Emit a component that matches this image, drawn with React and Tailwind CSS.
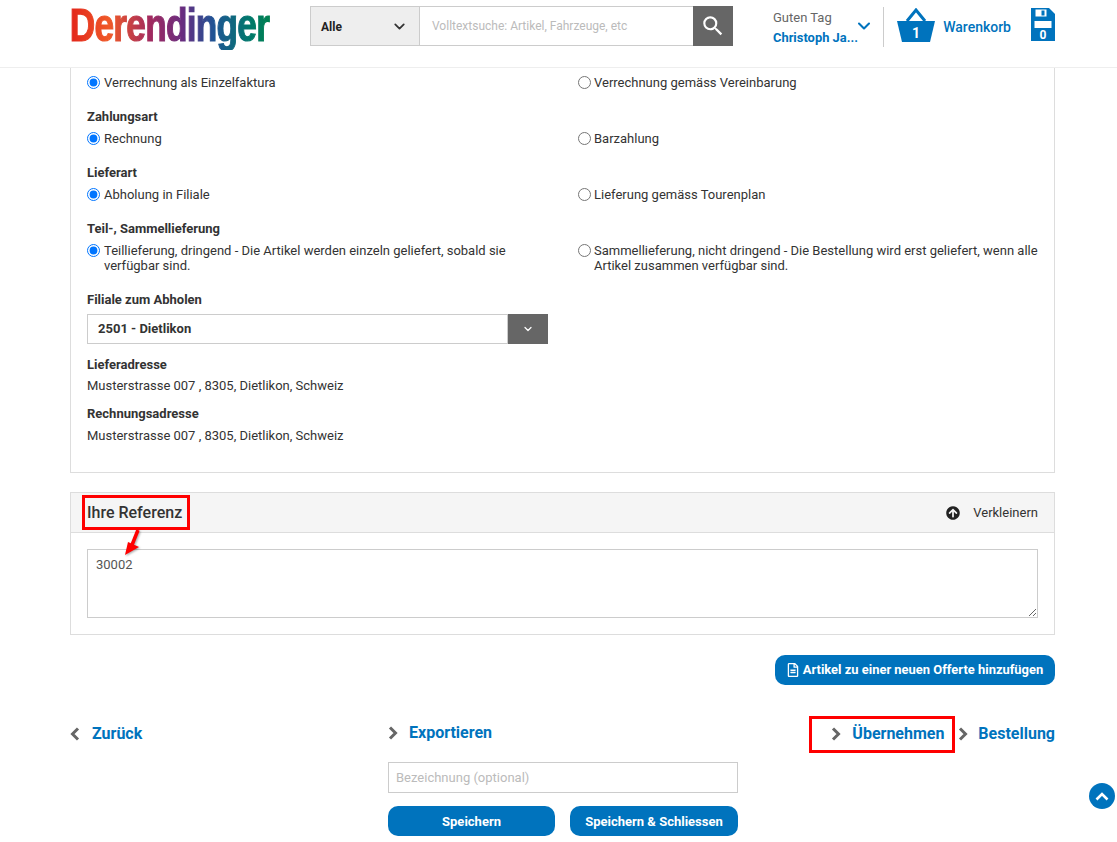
import { ChevronDown } from 'lucide-react'
import { MdSearch } from 'react-icons/md'
import { FaArrowCircleUp, FaRegFileAlt } from 'react-icons/fa'

function Radio({ name, checked, children }) {
  return (
    <label className={`flex items-start leading-[15px] ${checked ? 'gap-[4px]' : 'gap-[3px]'}`}>
      <input type="radio" name={name} defaultChecked={checked} className="mt-[1px] m-0 w-[13px] h-[13px] shrink-0" />
      <span>{children}</span>
    </label>
  )
}

function RadioRow({ name, left, right, className = '' }) {
  return (
    <div className={`grid grid-cols-[491px_470px] ${className}`}>
      <div className="pr-[30px]"><Radio name={name} checked>{left}</Radio></div>
      <Radio name={name + '2'}>{right}</Radio>
    </div>
  )
}

function Chevron({ left, className = '' }) {
  return (
    <svg width="10" height="14" viewBox="0 0 10 14" className={`shrink-0 text-[#666666] ${className}`}>
      <path d={left ? 'M8 1.5 L2.5 7 L8 12.5' : 'M2 1.5 L7.5 7 L2 12.5'} fill="none" stroke="currentColor" strokeWidth="3" />
    </svg>
  )
}

function Header() {
  return (
    <header className="h-[68px] shrink-0 border-b border-[#eeeeee] bg-white">
      <div className="mx-[70px] w-[985px] flex items-start">
        <div className="w-[240px] h-[60px] shrink-0">
          <span className="block w-max ml-[-1px] px-[1px] whitespace-nowrap origin-left scale-x-[0.75] text-[47px] leading-[50px] font-bold tracking-[-1px] font-['Liberation_Sans',sans-serif] [-webkit-text-stroke:1.2px_transparent] bg-[linear-gradient(90deg,#e2231a_0%,#f05a28_20%,#a32a5e_40%,#6a2c7f_56%,#1f5495_72%,#00796b_90%,#00804f_100%)] bg-clip-text text-transparent">
            Derendinger
          </span>
        </div>
        <div className="mt-[6px] w-[423px] h-[40px] flex shrink-0">
          <div className="w-[110px] flex items-center justify-between pl-[10px] pr-[11px] pt-[1px] bg-[#eeeeee] border border-[#cccccc] text-[12px] text-[#222222]">
            <span className="font-bold">Alle</span>
            <ChevronDown size={17} strokeWidth={2.5} className="text-[#333333]" />
          </div>
          <div className="flex-1 flex items-center pl-[12px] border-y border-[#cccccc] text-[12px] text-[#bbbbbb]">Volltextsuche: Artikel, Fahrzeuge, etc</div>
          <div className="w-[40px] bg-[#666666] flex items-center justify-center"><MdSearch size={26} className="text-white" /></div>
        </div>
        <div className="ml-[40px] mt-[9px] w-[84px] shrink-0">
          <div className="text-[13px] leading-[18px] text-[#666666]">Guten Tag</div>
          <div className="mt-[2px] text-[12.9px] leading-[18px] font-bold text-[#0073bd] whitespace-nowrap">Christoph Ja...</div>
        </div>
        <ChevronDown size={20} strokeWidth={2.5} className="mt-[16px] ml-[-3px] text-[#0073bd] shrink-0" />
        <div className="ml-[9px] mt-[7px] h-[40px] w-px bg-[#cccccc]"></div>
        <svg width="38" height="34" viewBox="0 0 38 34" className="ml-[14px] mt-[8px] shrink-0">
          <path d="M10 13 L19 2 L28 13" fill="none" stroke="#0073bd" strokeWidth="3" />
          <path d="M0 13 H38 L33 34 H5 Z" fill="#0073bd" />
          <text x="19" y="30" textAnchor="middle" fill="#ffffff" fontSize="14" fontWeight="700" fontFamily="Roboto">1</text>
        </svg>
        <span className="ml-[8px] mt-[18px] text-[14px] leading-[18px] font-medium text-[#0073bd]">Warenkorb</span>
        <svg width="24" height="33" viewBox="0 0 24 33" className="ml-[20px] mt-[8px] shrink-0">
          <path d="M0 0 H18 L24 6 V33 H0 Z" fill="#0073bd" />
          <rect x="4.5" y="1.5" width="11" height="7" fill="#ffffff" />
          <rect x="10.5" y="2.5" width="3" height="5" fill="#0073bd" />
          <rect x="3.5" y="13" width="17" height="7" fill="#ffffff" />
          <text x="12" y="31" textAnchor="middle" fill="#ffffff" fontSize="12" fontWeight="700" fontFamily="Roboto">0</text>
        </svg>
      </div>
    </header>
  )
}

function Nav({ icon, children, className = '' }) {
  return (
    <div className={`flex items-center font-bold text-[16px] leading-[20px] text-[#0073bd] ${className}`}>
      {icon}
      {children}
    </div>
  )
}

export default function App() {
  return (
    <div className="relative h-[842px] overflow-hidden bg-white font-['Roboto',sans-serif] text-[13px] text-[#333333]">
      <Header />
      <main className="mx-[70px] w-[985px]">
        <section className="border-x border-b border-[#dddddd] h-[405px] pl-[16px] pt-[7px]">
          <RadioRow name="a" left="Verrechnung als Einzelfaktura" right="Verrechnung gemäss Vereinbarung" />
          <div className="mt-[18px] font-bold leading-[18px]">Zahlungsart</div>
          <RadioRow name="b" left="Rechnung" right="Barzahlung" className="mt-[5px]" />
          <div className="mt-[18px] font-bold leading-[18px]">Lieferart</div>
          <RadioRow name="c" left="Abholung in Filiale" right="Lieferung gemäss Tourenplan" className="mt-[5px]" />
          <div className="mt-[18px] font-bold leading-[18px]">Teil-, Sammellieferung</div>
          <RadioRow
            name="d"
            left="Teillieferung, dringend - Die Artikel werden einzeln geliefert, sobald sie verfügbar sind."
            right="Sammellieferung, nicht dringend - Die Bestellung wird erst geliefert, wenn alle Artikel zusammen verfügbar sind."
            className="mt-[5px]"
          />
          <div className="mt-[18px] font-bold leading-[18px]">Filiale zum Abholen</div>
          <div className="mt-[5px] w-[461px] h-[30px] flex">
            <div className="flex-1 flex items-center pl-[10px] border border-[#cccccc] font-bold">2501 - Dietlikon</div>
            <div className="w-[40px] bg-[#666666] flex items-center justify-center"><ChevronDown size={12} strokeWidth={2.5} className="text-white" /></div>
          </div>
          <div className="mt-[12px] font-bold leading-[18px]">Lieferadresse</div>
          <div className="mt-[3px] leading-[18px]">Musterstrasse 007 , 8305, Dietlikon, Schweiz</div>
          <div className="mt-[10px] font-bold leading-[18px]">Rechnungsadresse</div>
          <div className="mt-[4px] leading-[18px]">Musterstrasse 007 , 8305, Dietlikon, Schweiz</div>
        </section>

        <section className="mt-[19px] h-[143px] border border-[#dddddd]">
          <div className="h-[40px] bg-[#f5f5f5] border-b border-[#dddddd] flex items-center justify-between px-[16px]">
            <span className="text-[16px] font-medium">Ihre Referenz</span>
            <span className="flex items-center gap-[13px] text-[13px] pt-[1px]">
              <FaArrowCircleUp size={14} className="text-[#222222]" />
              Verkleinern
            </span>
          </div>
          <div className="px-[16px] pt-[16px]">
            <textarea
              defaultValue="30002"
              className="block w-[951px] h-[69px] border border-[#cccccc] pl-[8px] pt-[6px] text-[13px] leading-[18px] text-[#555555] outline-none"
            />
          </div>
        </section>

        <div className="mt-[20px] flex justify-end">
          <button className="w-[280px] h-[30px] rounded-[10px] bg-[#0073bd] text-white text-[12.95px] font-bold flex items-center justify-center gap-[3px] pr-[1px]">
            <FaRegFileAlt size={14} />
            Artikel zu einer neuen Offerte hinzufügen
          </button>
        </div>

        <div className="mt-[31px] grid grid-cols-[318px_350px_1fr]">
          <Nav icon={<Chevron left className="mr-[12px]" />} className="mt-[8px] self-start">Zurück</Nav>
          <div className="pt-[7px]">
            <Nav icon={<Chevron className="mr-[11px]" />}>Exportieren</Nav>
            <input
              placeholder="Bezeichnung (optional)"
              className="mt-[19px] block w-[350px] h-[31px] border border-[#cccccc] px-[7px] text-[13px] placeholder:text-[#bbbbbb] outline-none"
            />
            <div className="mt-[13px] flex gap-[15px]">
              <button className="w-[167px] h-[30px] pt-[1px] rounded-[10px] bg-[#0073bd] text-white text-[13px] font-bold">Speichern</button>
              <button className="w-[168px] h-[30px] pt-[1px] rounded-[10px] bg-[#0073bd] text-white text-[13px] font-bold">Speichern &amp; Schliessen</button>
            </div>
          </div>
          <div className="flex justify-end items-start">
            <Nav icon={<Chevron className="mr-[11px]" />} className="w-[146px] h-[37px] border-[3px] border-[#ff0000] pl-[19px] pb-[1px]">Übernehmen</Nav>
            <Nav icon={<Chevron className="mr-[10px]" />} className="ml-[3px] h-[37px] pb-[1px]">Bestellung</Nav>
          </div>
        </div>
      </main>

      {/* annotations and floating things */}
      <div className="absolute left-[82px] top-[495px] w-[108px] h-[35px] border-[3px] border-[#ff0000]"></div>
      <svg width="30" height="40" viewBox="0 0 30 40" className="absolute left-[115px] top-[525px] overflow-visible drop-shadow-[1px_1px_1px_rgba(0,0,0,0.35)]">
        <path d="M23 5 L17 20" stroke="#ff0000" strokeWidth="3.5" fill="none" />
        <path d="M10 30 L13 17 L24 22 Z" fill="#ff0000" />
      </svg>
      <button className="absolute left-[1089px] top-[783px] w-[26px] h-[26px] rounded-full bg-[#0073bd] flex items-center justify-center">
        <svg width="14" height="9" viewBox="0 0 14 9"><path d="M1.5 7.5 L7 2 L12.5 7.5" fill="none" stroke="#ffffff" strokeWidth="2.6" /></svg>
      </button>
    </div>
  )
}
